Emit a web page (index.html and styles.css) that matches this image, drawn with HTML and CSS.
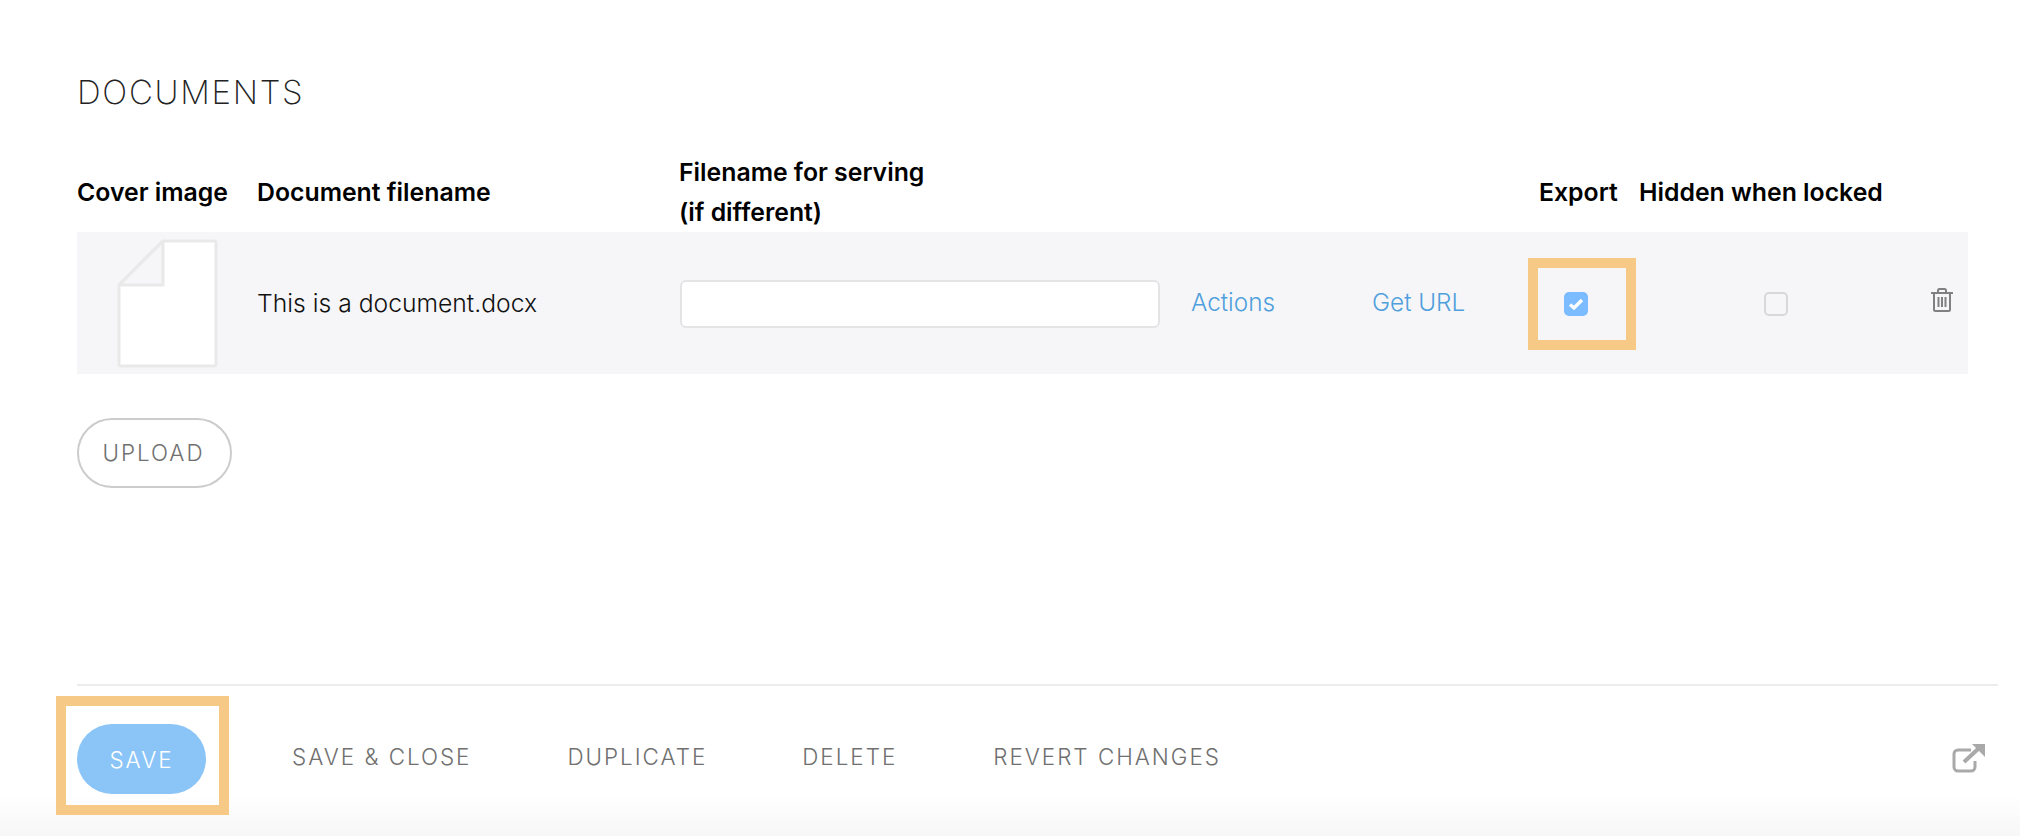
FILE: index.html
```html
<!DOCTYPE html>
<html lang="en">
<head>
<meta charset="utf-8">
<title>Documents</title>
<link rel="stylesheet" href="styles.css">
</head>
<body>
<main class="page">
  <h2 class="title">DOCUMENTS</h2>
  <div class="head-row">
    <div class="th">Cover image</div>
    <div class="th">Document filename</div>
    <div class="th">Filename for serving<br>(if different)</div>
    <div class="th">Export</div>
    <div class="th">Hidden when locked</div>
  </div>
  <div class="doc-row">
    <div class="cover">
      <svg class="doc-icon" width="101" height="129" viewBox="0 0 101 129">
        <path d="M46 2H97a2 2 0 0 1 2 2V125a2 2 0 0 1-2 2H4a2 2 0 0 1-2-2V46Z" fill="#fff" stroke="#e9e9e9" stroke-width="3" stroke-linejoin="round"/>
        <path d="M46 2V46H2Z" fill="#f6f6f8" stroke="#e9e9e9" stroke-width="3" stroke-linejoin="round"/>
      </svg>
    </div>
    <div class="filename">This is a document.docx</div>
    <div><input class="serve-input" type="text"></div>
    <a class="link">Actions</a>
    <a class="link">Get URL</a>
    <div class="check-cell">
      <span class="check checked">
        <svg width="16" height="13" viewBox="0 0 16 13"><path d="M2 6.500 6 10 14 2" fill="none" stroke="#fff" stroke-width="3.400"/></svg>
      </span>
      <span class="mark mark-check"></span>
    </div>
    <div class="hidden-cell"><span class="check"></span></div>
    <div class="trash-cell">
      <svg width="22" height="24" viewBox="0 0 22 24" fill="none" stroke="#808080" stroke-width="2">
        <path d="M0 5H22M3 5V21.500A1.500 1.500 0 0 0 4.500 23H17.500A1.500 1.500 0 0 0 19 21.500V5M7 5V2.500A1.500 1.500 0 0 1 8.500 1H13.500A1.500 1.500 0 0 1 15 2.500V5M7.500 9V19M11 9V19M14.500 9V19"/>
      </svg>
    </div>
  </div>
  <button class="btn-upload" type="button"><span class="btn-label">UPLOAD</span></button>
  <footer class="footer">
    <div class="save-wrap">
      <button class="btn-save" type="button">SAVE</button>
      <span class="mark mark-save"></span>
    </div>
    <a class="action a1">SAVE &amp; CLOSE</a>
    <a class="action a2">DUPLICATE</a>
    <a class="action a3">DELETE</a>
    <a class="action a4">REVERT CHANGES</a>
    <svg class="ext-icon" width="33" height="29" viewBox="0 0 33 29" fill="none" stroke="#a9a9a9" stroke-width="3">
      <path d="M19 6H6A4 4 0 0 0 2 10V23A4 4 0 0 0 6 27H19A4 4 0 0 0 23 23V17"/>
      <path d="M12 18 26 5" stroke-width="4"/>
      <path d="M20 0H33V13Z" fill="#a9a9a9" stroke="none"/>
    </svg>
  </footer>
</main>
</body>
</html>
```
FILE: styles.css
```css
* { box-sizing: border-box; }
html, body { margin: 0; height: 100%; }
body {
  font-family: "Inter", "Liberation Sans", sans-serif;
  color: #111;
  background: linear-gradient(to bottom, #fff 0, #fff 795px, #f7f7f7 836px);
  overflow: hidden;
}
.page { padding: 0 22px 0 77px; display: flex; flex-direction: column; height: 836px; }
.title {
  margin: 74px 0 0;
  height: 36px;
  font-size: 33px;
  line-height: 36px;
  font-weight: 200;
  letter-spacing: 1.700px;
  color: #222;
}
.head-row, .doc-row { display: grid; width: 1891px; }
.head-row {
  margin-top: 41px;
  height: 81px;
  grid-template-columns: 180px 422px 860px 100px 329px;
  align-items: center;
}
.th { font-size: 24.800px; line-height: 40px; font-weight: 600; color: #000; }
.doc-row {
  height: 142px;
  background: #f6f6f8;
  grid-template-columns: 180px 422px 512px 181px 167px 100px 292px 37px;
  align-items: center;
}
.cover { padding: 0 0 0 40px; height: 142px; display: flex; align-items: center; }
.doc-icon { display: block; margin-top: 1px; }
.filename { font-size: 24.700px; font-weight: 300; color: #111; }
.serve-input {
  display: block;
  width: 480px;
  height: 48px;
  margin: 2px 0 0 1px;
  border: 2px solid #e4e4e6;
  border-radius: 6px;
  background: #fff;
}
.link { font-size: 24.300px; font-weight: 300; color: #4f9fdd; margin-top: -2px; }
.check-cell { position: relative; height: 24px; margin-top: 2px; padding-left: 25px; }
.hidden-cell { height: 24px; margin-top: 2px; padding-left: 125px; }
.check {
  display: flex; align-items: center; justify-content: center;
  width: 24px; height: 24px;
  border: 2px solid #d8d8d8;
  border-radius: 5px;
}
.check.checked { background: #7abcff; border: 0; }
.trash-cell { height: 24px; margin-top: -7px; }
.trash-cell svg { display: block; }
.mark { position: absolute; border: 10px solid #f7c986; pointer-events: none; }
.mark-check { left: -11px; top: -34px; width: 108px; height: 92px; }
.btn-upload {
  margin-top: 44px;
  width: 155px;
  height: 70px;
  border: 2px solid #ccc;
  border-radius: 35px;
  background: #fff;
  font: 300 22.400px "Inter", sans-serif;
  letter-spacing: 2px;
  color: #707070;
  padding: 0 2px 2px 0;
}
.footer {
  margin-top: 196px;
  border-top: 2px solid #ececec;
  padding-top: 38px;
  height: 112px;
  display: flex;
  align-items: flex-start;
  width: 1921px;
}
.save-wrap { position: relative; }
.btn-save {
  display: block;
  width: 129px;
  height: 70px;
  border: 0;
  border-radius: 35px;
  background: #8bc5f7;
  color: #fff;
  font: 300 22.400px "Inter", sans-serif;
  letter-spacing: 2px;
  padding: 0;
}
.mark-save { left: -21px; top: -28px; width: 173px; height: 119px; }
.action {
  font-size: 22.400px;
  line-height: 26px;
  font-weight: 300;
  letter-spacing: 2px;
  color: #707070;
  margin-top: 20px;
}
.a1 { margin-left: 86px; }
.a2 { margin-left: 96px; }
.a3 { margin-left: 95px; }
.a4 { margin-left: 96px; }
.ext-icon { margin-left: auto; margin-right: 13px; margin-top: 20px; }
```
